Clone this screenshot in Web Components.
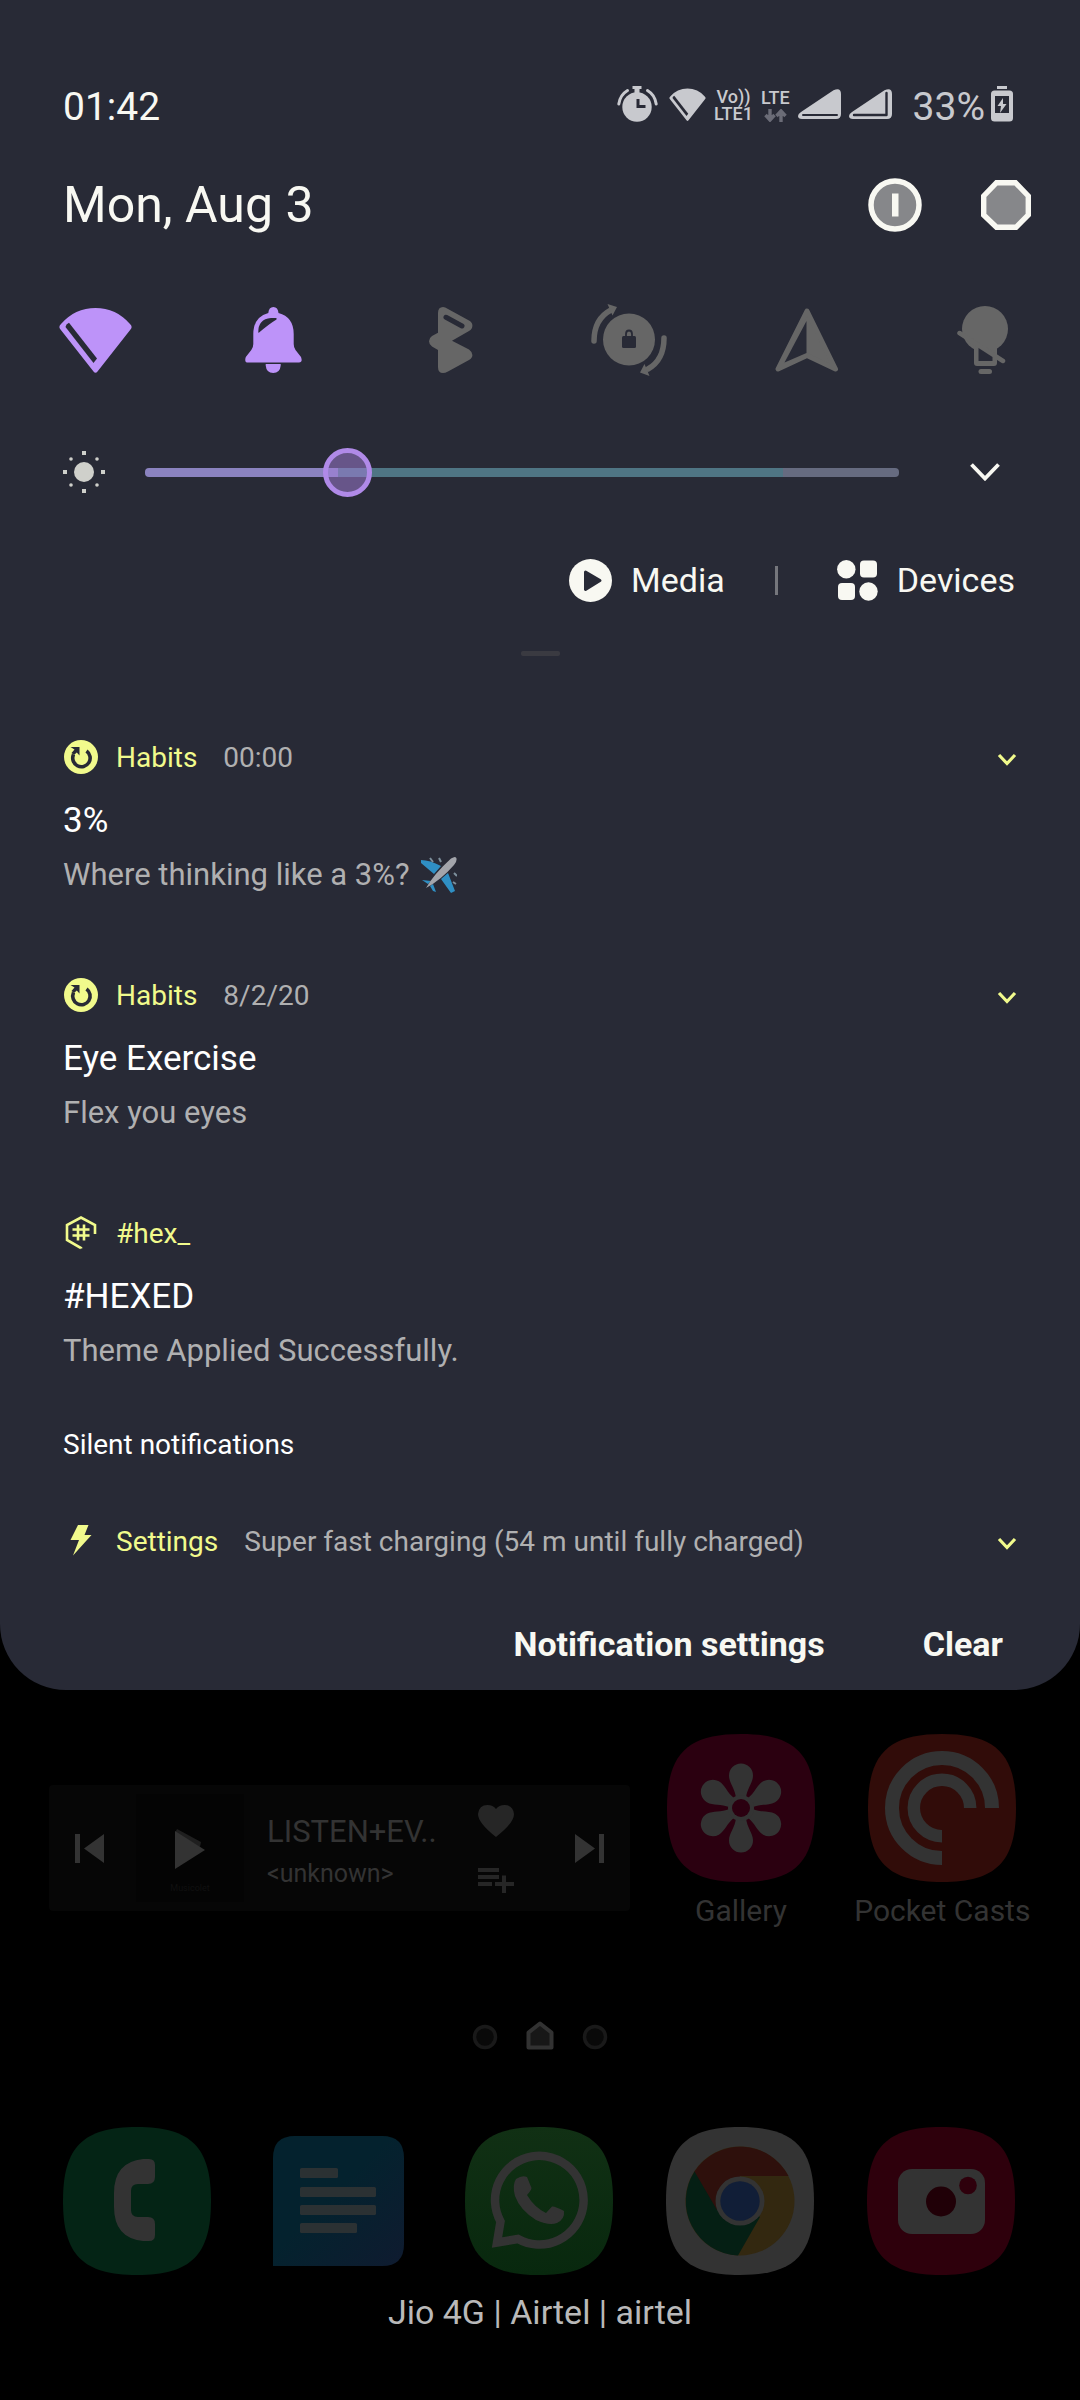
<!DOCTYPE html>
<html lang="en">
<head>
<meta charset="utf-8">
<meta name="viewport" content="width=device-width, initial-scale=1">
<title>Notification shade</title>
<style>
  :root {
    --bg: #282a36;
    --fg: #f8f8f2;
    --dim: #b0b0b1;
    --accent: #bd93f9;
    --app: #f1fa8c;
    --off: #666666;
    --status: #c8c9ce;
  }
  html, body { margin: 0; background: #000; }
  body { font-family: Roboto, "Liberation Sans", sans-serif; color: var(--fg); }
</style>
</head>
<body>
<phone-screen></phone-screen>

<script>
const SQUIRCLE = 'M74 0C128 0 148 20 148 74S128 148 74 148 0 128 0 74 20 0 74 0Z';
const petals = [0, 60, 120, 180, 240, 300].map(a =>
  `<path transform="translate(74 74) rotate(${a})" d="M-5 -10C-6 -20 -12 -25 -12 -32.500A12 12 0 0 1 12 -32.500C12 -25 6 -20 5 -10Z"/>`).join('');

/* name: [width, height, markup] */
const ICONS = {
  alarm: [41, 36, `<circle cx="20" cy="21" r="14.700" fill="currentColor"/><path d="M15.500 0h9v3h-2v4h-5V3h-2z" fill="currentColor"/>
    <path d="M1.800 18Q3 9 10.500 4.500M39.200 18Q38 9 30.500 4.500" fill="none" stroke="currentColor" stroke-width="3" stroke-linecap="round"/>
    <path d="M21 13v7.500h7.500" fill="none" stroke="var(--bg)" stroke-width="3"/>`],
  wifi: [73, 66, `<path fill="currentColor" d="M2 17A45 45 0 0 1 71 17Q74 19.500 71.500 22.500L38.500 64.500Q36.500 67 34.500 64.500L1.500 22.500Q-1 19.500 2 17Z"/>
    <path fill="var(--bg)" d="M7.500 17.500L10 15.700 38 51.500 34.500 56 6.500 20Z"/>`],
  arrows: [23, 13, `<path d="M6 0V10M1.500 6L6 11 10.500 6M17 13V3M12.500 7L17 2 21.500 7" fill="none" stroke="#6b6c77" stroke-width="3.400"/>`],
  signal: [43, 30, `<path fill="currentColor" d="M35.500 1.200Q43 -2 43 5V25Q43 30 38 30H4Q0 30 0 27 0 25 3 23Z"/>
    <path d="M5 26H39" stroke="var(--bg)" stroke-width="2" stroke-linecap="round"/>`],
  signal2: [43, 30, `<path fill="currentColor" d="M35.500 1.200Q43 -2 43 5V25Q43 30 38 30H4Q0 30 0 27 0 25 3 23Z"/>
    <path d="M5 26H37.500V4" fill="none" stroke="var(--bg)" stroke-width="2.400" stroke-linecap="round" stroke-linejoin="round"/>`],
  battery: [22, 36, `<path fill="currentColor" d="M6 0h10v3H6z"/><rect y="4.500" width="22" height="31" rx="3.500" fill="currentColor"/>
    <path fill="var(--bg)" d="M4 10h14v17H4z"/><path fill="currentColor" d="M12 12L6.500 20H10L9 27 15.500 18H12Z"/>`],
  power: [54, 54, `<circle cx="27" cy="27" r="24" fill="#86878a" stroke="currentColor" stroke-width="5.500"/><path fill="currentColor" d="M24 15.500h6.500v23H24z"/>`],
  octagon: [50, 50, `<path d="M15.500 2.700H34.500L47.300 16V35L35 47.300H15.500L2.700 35V16Z" fill="#86878a" stroke="currentColor" stroke-width="5.400"/>`],
  bell: [57, 66, `<path fill="currentColor" d="M23.300 6Q23.800 0 28.400 0T33.500 6Q48.700 10 48.700 27V37Q48.700 40.500 50.500 43L56 50Q58 55.500 54 55.500H3Q-1 55.500 .8 50L6.300 43Q8.300 40.500 8.300 37V27Q8.300 10 23.300 6ZM20.700 57H35.700V58.500Q35 66 28.200 66T20.700 58.500Z"/>
    <path fill="var(--bg)" d="M13.300 25.500Q13 12 26 11H31.500V12.500Q24 17 13.800 25.800Z"/>`],
  bluetooth: [44, 66, `<path fill="currentColor" d="M9 6Q9 0 14 0 16 0 19 2L40 13.500Q43.400 15.500 43.400 18.500 43.400 22 40 24L23 33.700 40 42.500Q43.400 45 43.400 48 43.400 51 40 53L19 64.500Q16 66 14 66 9 66 9 60V43L3 39.500Q0 37.500 0 34.300 0 31 3 29L9 25.700Z"/>
    <path d="M17 10.300L33 19" stroke="var(--bg)" stroke-width="5" stroke-linecap="round"/>`],
  rotate: [76, 72, `<circle cx="38" cy="35.500" r="26" fill="currentColor"/>
    <path d="M3 37Q3 15 20 6M73 34Q73 56 57 65" fill="none" stroke="currentColor" stroke-width="5.500" stroke-linecap="round"/>
    <path fill="currentColor" d="M16.500 0L26 3 21.500 11.500ZM49 68.500L58.500 72 53.500 60Z"/>
    <rect x="31" y="32" width="14" height="12" rx="1.500" fill="var(--bg)"/><path d="M35 33V30Q35 26.500 38 26.500T41 30V33" fill="none" stroke="var(--bg)" stroke-width="1.800"/>`],
  location: [64, 64, `<path d="M32 3L60.500 61 32 47.500 3 61Z" fill="currentColor" stroke="currentColor" stroke-width="5" stroke-linejoin="round"/><path fill="var(--bg)" d="M31.500 13V45L9.500 54.500Z"/>`],
  bulb: [56, 68, `<circle cx="28" cy="23" r="23" fill="currentColor"/><path fill="currentColor" d="M8 33L17 42H39L48 33ZM17 41H40V57Q40 60 37 60H20Q17 60 17 57Z"/>
    <path d="M2.500 27L46 55" stroke="currentColor" stroke-width="4.500" stroke-linecap="round"/><path fill="var(--bg)" d="M21.500 42L35.500 51V55H21.500Z"/>
    <rect x="21.500" y="63" width="13.500" height="5" rx="2.500" fill="currentColor"/>`],
  sun: [42, 42, `<g fill="#cfd0cb"><circle cx="21" cy="21" r="10"/><path d="M19 0h4v4h-4zM19 38h4v4h-4zM0 19h4v4H0zM38 19h4v4h-4z"/><circle cx="8" cy="8" r="1.800"/><circle cx="34" cy="8" r="1.800"/><circle cx="8" cy="34" r="1.800"/><circle cx="34" cy="34" r="1.800"/></g>`],
  chevron: [30, 18, `<path d="M1.500 1.500L15 15.500 28.500 1.500" fill="none" stroke="currentColor" stroke-width="3.800"/>`],
  chevronSmall: [20, 13, `<path d="M2 2L10 10.500 18 2" fill="none" stroke="currentColor" stroke-width="3.200"/>`],
  play: [43, 43, `<circle cx="21.500" cy="21.500" r="21.500" fill="currentColor"/><path d="M16.500 13L31 21.500 16.500 30.500Z" fill="var(--bg)" stroke="var(--bg)" stroke-width="3" stroke-linejoin="round"/>`],
  devices: [41, 41, `<g fill="currentColor"><circle cx="9.300" cy="9.300" r="9.200"/><rect x="23" y=".5" width="17" height="17" rx="4"/><rect x="1" y="23" width="17" height="17" rx="4"/><circle cx="31.500" cy="31.500" r="9.200"/></g>`],
  habits: [34, 34, `<circle cx="17" cy="17" r="17" fill="currentColor"/><path d="M22.500 11A8.700 8.700 0 1 1 9.500 14.500" fill="none" stroke="var(--bg)" stroke-width="3.600"/><path fill="var(--bg)" d="M6.500 7H15.500V15.500L12.800 12.500 10 15 7.500 13 10.500 9.500Z"/>`],
  hex: [34, 34, `<path d="M17 32.500V32L3 24V9L17 1.500 31 9V18" fill="none" stroke="currentColor" stroke-width="2.600"/><path d="M14 8.500V24.500M20 8.500V24.500M8.500 13.500H25.500M8.500 19.500H25.500" stroke="currentColor" stroke-width="2.600"/>`],
  bolt: [34, 34, `<path fill="currentColor" d="M14 1H24.500L20.500 11H27.500L9 31.500 15 16H6.500Z"/>`],
  plane: [36, 36, `<path fill="#2f8fc4" d="M0 3Q9 3 20 9L13 17 0 6ZM27 16L34 34 30 36 20 22ZM1 23L10 24 7 27ZM12 27L15 35 12 34 9 29Z"/><path d="M9 1l3 4M18 1l2 4M33 16l3 3M32 25l3 2" stroke="#7d8f9c" stroke-width="2"/><path fill="#a3a5ab" d="M5 31Q13 17 30 1.500 35-1.500 35.500 1.500 36 5 33 8 20 23 5 31Z"/>`],
  prev: [29, 29, `<path fill="currentColor" d="M0 0h5v29H0zM29 0V29L9 14.500Z"/>`],
  next: [29, 29, `<path fill="currentColor" d="M24 0h5v29h-5zM0 0V29L20 14.500Z"/>`],
  playPlain: [30, 40, `<path fill="#1f1f1f" d="M2 0L26 13 25 18 0 4Z"/><path fill="currentColor" d="M0 2V40L30 21Z"/>`],
  heart: [36, 32, `<path fill="currentColor" d="M18 32Q0 18 0 9 1 0 9.500 0 15 0 18 4 21 0 26.500 0 35 0 36 9 36 18 18 32Z"/>`],
  queue: [36, 25, `<path fill="currentColor" d="M0 0H21V4H0ZM0 7H21V11H0ZM0 14H14V18H0ZM24 7.500H28V14H36V18H28V25H24V18H17V14H24Z"/>`],
  dot: [26, 26, `<circle cx="13" cy="13" r="10.500" fill="#090909" stroke="#191919" stroke-width="3.500"/>`],
  home: [28, 29, `<path d="M2.500 11.500L14 2.500 25.500 11.500V26.500H2.500Z" fill="#171717" stroke="#323232" stroke-width="4" stroke-linejoin="round"/>`],
  gallery: [148, 148, `<path d="${SQUIRCLE}" fill="#2b0010"/><g fill="#333">${petals}<circle cx="74" cy="74" r="13"/></g><circle cx="74" cy="74" r="9" fill="#2b0010"/>`],
  pocket: [148, 148, `<path d="${SQUIRCLE}" fill="#310c09"/><g fill="none" stroke="#333"><path d="M74 124A50 50 0 1 1 124 74" stroke-width="14"/><path d="M74 102.200A28.200 28.200 0 1 1 102.200 74" stroke-width="12.500"/></g>`],
  phone: [148, 148, `<path d="${SQUIRCLE}" fill="#042415"/><path fill="#333" d="M80 32H86Q92 32 92 38V50Q92 57 85 57H75Q68 57 68 64V83Q68 90 75 90H85Q92 90 92 97V108Q92 114 86 114H80Q51 111 51 80V66Q51 35 80 32Z"/>`],
  messages: [148, 148, `<defs><linearGradient id="m" x1="0" y1="0" x2="1" y2="1"><stop offset=".45" stop-color="#04222e"/><stop offset="1" stop-color="#0f1b30"/></linearGradient></defs>
    <path fill="url(#m)" d="M9 139V31Q9 9 31 9H118Q140 9 140 31V117Q140 139 118 139Z"/><g fill="#2b3133"><rect x="36" y="41" width="38" height="10" rx="1.500"/><rect x="36" y="60" width="76" height="10" rx="1.500"/><rect x="36" y="78" width="76" height="10" rx="1.500"/><rect x="36" y="96" width="57" height="10" rx="1.500"/></g>`],
  whatsapp: [148, 148, `<defs><linearGradient id="w" x2="0" y2="1"><stop stop-color="#113014"/><stop offset="1" stop-color="#08280e"/></linearGradient></defs>
    <path d="${SQUIRCLE}" fill="url(#w)"/><path d="M35.500 94.500A44.300 44.300 0 1 1 53 112L32 115.500Z" fill="none" stroke="#333" stroke-width="8.500"/>
    <path fill="#333" d="M51 52Q57 48 62 50L66.500 61Q66.500 63 62 68 69 80 81 86L87 79.500Q90 79 99 84 100 92 92 96 84 99 71 93 55 83 50 69 47 58 51 52Z"/>`],
  chrome: [148, 148, `<path d="${SQUIRCLE}" fill="#333"/><circle cx="74" cy="74" r="54.500" fill="#332810"/>
    <path fill="#051f14" d="M28.500 44.500A54.500 54.500 0 0 0 72 128.500L94 90 74 74Z"/><path fill="#2e100c" d="M28.500 44.500A54.500 54.500 0 0 1 122.500 49H74V74L51 83Z"/>
    <circle cx="74" cy="74" r="24.500" fill="#333"/><circle cx="74" cy="74" r="19.700" fill="#111e37"/>`],
  camera: [148, 148, `<path d="${SQUIRCLE}" fill="#2e000c"/><rect x="31" y="42" width="87" height="65" rx="14" fill="#333"/><circle cx="74" cy="74.500" r="15" fill="#200007"/><circle cx="101" cy="58.500" r="8.800" fill="#2e000c"/>`],
};

const define = (name, html) => customElements.define(name, class extends HTMLElement {
  constructor() {
    super();
    const t = document.createElement('template');
    t.innerHTML = html;
    this.attachShadow({ mode: 'open' }).append(t.content.cloneNode(true));
  }
});

/* <ui-icon name="wifi" width="37"> draws one icon at its own or a given width */
customElements.define('ui-icon', class extends HTMLElement {
  connectedCallback() {
    if (this.shadowRoot) return;
    const [w, h, body] = ICONS[this.getAttribute('name')];
    const width = +this.getAttribute('width') || w;
    this.attachShadow({ mode: 'open' }).innerHTML = `
      <style>:host{display:inline-flex;flex:none}svg{display:block}</style>
      <svg aria-hidden="true" width="${width}" height="${Math.round(width * h / w)}" viewBox="0 0 ${w} ${h}">${body}</svg>`;
  }
});

define('status-bar', `
  <style>
    :host{display:flex;align-items:center;justify-content:space-between;height:52px;padding:0 67px 0 63px;font-size:39px;line-height:46px}
    time,.level{padding-top:5px}
    .right{display:flex;align-items:center;color:var(--status)}
    .group{display:flex;align-items:center;gap:8px}
    .stack{display:flex;flex-direction:column;align-items:center;padding-top:2px;font-size:18px;line-height:17px;font-weight:500}
    .lte{gap:3px}
    .battery{display:flex;align-items:center;gap:6px;margin-left:21px}
    .alarm{margin-right:3px}
  </style>
  <time>01:42</time>
  <div class="right">
    <div class="group">
      <ui-icon name="alarm" class="alarm"></ui-icon>
      <ui-icon name="wifi" width="37"></ui-icon>
      <div class="stack"><span>Vo))</span><span>LTE1</span></div>
      <div class="stack lte"><span>LTE</span><ui-icon name="arrows"></ui-icon></div>
      <ui-icon name="signal"></ui-icon>
      <ui-icon name="signal2"></ui-icon>
    </div>
    <div class="battery"><span class="level">33%</span><ui-icon name="battery"></ui-icon></div>
  </div>`);

define('date-row', `
  <style>
    :host{display:flex;align-items:center;justify-content:space-between;height:64px;padding:0 49px 0 63px}
    h1{margin:0;font-size:50px;line-height:64px;font-weight:400}
    div{display:flex;align-items:center;gap:59px}
    button{display:flex;padding:0;border:0;background:none;color:var(--fg)}
  </style>
  <h1>Mon, Aug 3</h1>
  <div>
    <button aria-label="Power"><ui-icon name="power"></ui-icon></button>
    <button aria-label="Settings"><ui-icon name="octagon"></ui-icon></button>
  </div>`);

customElements.define('quick-tile', class extends HTMLElement {
  connectedCallback() {
    if (this.shadowRoot) return;
    this.attachShadow({ mode: 'open' }).innerHTML = `
      <style>
        :host{display:flex;justify-content:center}
        button{display:flex;align-items:center;justify-content:center;width:100%;height:80px;padding:0;border:0;background:none;color:var(--off)}
        :host([on]) button{color:var(--accent)}
      </style>
      <button aria-label="${this.getAttribute('label')}" aria-pressed="${this.hasAttribute('on')}"><ui-icon name="${this.getAttribute('icon')}"></ui-icon></button>`;
  }
});

define('quick-tiles', `
  <style>:host{display:grid;grid-template-columns:repeat(6,1fr);padding:0 6px}</style>
  <quick-tile on icon="wifi" label="Wi-Fi"></quick-tile>
  <quick-tile on icon="bell" label="Sound"></quick-tile>
  <quick-tile icon="bluetooth" label="Bluetooth"></quick-tile>
  <quick-tile icon="rotate" label="Auto rotate"></quick-tile>
  <quick-tile icon="location" label="Location"></quick-tile>
  <quick-tile icon="bulb" label="Torch"></quick-tile>`);

define('brightness-row', `
  <style>
    :host{display:flex;align-items:center;height:50px;padding:0 80px 0 63px}
    input{flex:1;min-width:0;height:50px;margin:0 71px 0 40px;appearance:none;background:none}
    input::-webkit-slider-runnable-track{height:9px;border-radius:4px;background:linear-gradient(90deg,#8b83c0 25.600%,#4f7584 25.600% 84.600%,#666b80 84.600%)}
    input::-webkit-slider-thumb{appearance:none;box-sizing:border-box;width:49px;height:49px;margin-top:-20px;border-radius:50%;border:5px solid #b08ae8;background:#a67fdc80}
    button{display:flex;padding:0;border:0;background:none;color:var(--fg)}
  </style>
  <ui-icon name="sun"></ui-icon>
  <input type="range" min="0" max="1000" value="253" aria-label="Brightness">
  <button aria-label="Expand"><ui-icon name="chevron"></ui-icon></button>`);

define('panel-links', `
  <style>
    :host{display:flex;align-items:center;justify-content:flex-end;height:44px;padding:0 65px}
    button{display:flex;align-items:center;gap:19px;padding:0;border:0;background:none;color:var(--fg);font:inherit;font-size:34px;line-height:42px}
    i{width:3px;height:29px;margin:0 59px 0 50px;background:#75767c}
  </style>
  <button><ui-icon name="play"></ui-icon>Media</button><i></i><button><ui-icon name="devices"></ui-icon>Devices</button>`);

customElements.define('notification-item', class extends HTMLElement {
  connectedCallback() {
    if (this.shadowRoot) return;
    const more = this.hasAttribute('expandable')
      ? '<button aria-label="Expand"><ui-icon name="chevronSmall"></ui-icon></button>' : '';
    const time = this.getAttribute('time');
    this.attachShadow({ mode: 'open' }).innerHTML = `
      <style>
        :host{display:block;padding:0 63px}
        header{display:flex;align-items:center;height:34px;font-size:28px;line-height:34px}
        .badge{margin:0 18px 0 1px}
        .app,ui-icon{color:var(--app)}
        .app,.time{padding-top:2px}
        .time{margin-left:26px;color:var(--dim)}
        button{display:flex;margin-left:auto;padding:4px 0 0;border:0;background:none}
        ::slotted(h2){margin:26px 0 0;font-size:35px;line-height:42px;font-weight:400;color:#fff}
        ::slotted(p){margin:15px 0 0;font-size:31px;line-height:36px;color:var(--dim)}
      </style>
      <header><ui-icon class="badge" name="${this.getAttribute('icon')}"></ui-icon><span class="app">${this.getAttribute('app')}</span>${time ? `<span class="time">${time}</span>` : ''}${more}</header>
      <slot></slot>`;
  }
});

define('notification-list', `
  <style>
    :host{display:flex;flex-direction:column;gap:85px}
    .plane{height:36px;margin-left:4px;vertical-align:top}
    h3{margin:-26px 63px -23px;font-size:28px;line-height:34px;font-weight:400;color:#fff}
  </style>
  <notification-item icon="habits" app="Habits" time="00:00" expandable><h2>3%</h2><p>Where thinking like a 3%? <ui-icon class="plane" name="plane" role="img" aria-label="airplane"></ui-icon></p></notification-item>
  <notification-item icon="habits" app="Habits" time="8/2/20" expandable><h2>Eye Exercise</h2><p>Flex you eyes</p></notification-item>
  <notification-item icon="hex" app="#hex_"><h2>#HEXED</h2><p>Theme Applied Successfully.</p></notification-item>
  <h3>Silent notifications</h3>
  <notification-item icon="bolt" app="Settings" time="Super fast charging (54 m until fully charged)" expandable></notification-item>`);

define('panel-footer', `
  <style>
    :host{display:flex;justify-content:flex-end;gap:98px;padding:0 77px}
    button{padding:0;border:0;background:none;color:var(--fg);font:inherit;font-size:34px;line-height:42px;font-weight:700}
  </style>
  <button>Notification settings</button><button>Clear</button>`);

define('notification-panel', `
  <style>
    :host{display:flex;flex-direction:column;padding:78px 0 25px;background:var(--bg);border-radius:0 0 66px 66px}
    date-row{margin-top:43px}
    quick-tiles{margin-top:63px}
    brightness-row{margin-top:67px}
    panel-links{margin-top:61px}
    .handle{align-self:center;width:39px;height:5px;margin-top:49px;border-radius:2px;background:#3a3a41}
    notification-list{margin-top:84px}
    panel-footer{margin-top:65px}
  </style>
  <status-bar></status-bar>
  <date-row></date-row>
  <quick-tiles></quick-tiles>
  <brightness-row></brightness-row>
  <panel-links></panel-links>
  <div class="handle"></div>
  <notification-list></notification-list>
  <panel-footer></panel-footer>`);

define('music-widget', `
  <style>
    :host{display:flex;align-items:center;box-sizing:border-box;height:126px;padding:0 26px;border-radius:4px;background:#060606;color:#333}
    button{display:flex;padding:0;border:0;background:none;color:inherit}
    .art{display:flex;flex-direction:column;align-items:center;gap:14px;box-sizing:border-box;width:108px;height:108px;padding-top:35px;margin-left:32px;background:#040404;font-size:9px;line-height:10px}
    .art span{color:#101010}
    .text{flex:1;min-width:0;padding-top:6px;margin-left:23px}
    .title{font-size:31px;line-height:38px}
    .artist{margin-top:7px;font-size:25px;line-height:32px}
    .side{display:flex;flex-direction:column;align-items:center;gap:31px;padding-top:2px;margin-right:61px;color:#262626}
  </style>
  <button aria-label="Previous"><ui-icon name="prev"></ui-icon></button>
  <div class="art"><button aria-label="Play"><ui-icon name="playPlain"></ui-icon></button><span>Musicolet</span></div>
  <div class="text"><div class="title">LISTEN+EV..</div><div class="artist">&lt;unknown&gt;</div></div>
  <div class="side"><button aria-label="Like"><ui-icon name="heart"></ui-icon></button><button aria-label="Add to queue"><ui-icon name="queue"></ui-icon></button></div>
  <button aria-label="Next"><ui-icon name="next"></ui-icon></button>`);

customElements.define('app-icon', class extends HTMLElement {
  connectedCallback() {
    if (this.shadowRoot) return;
    this.attachShadow({ mode: 'open' }).innerHTML = `
      <style>
        :host{display:flex;justify-content:center;min-width:0}
        button{display:flex;flex-direction:column;align-items:center;gap:11px;padding:0;border:0;background:none;color:#333;font:inherit;font-size:30px;line-height:36px;white-space:nowrap}
      </style>
      <button aria-label="${this.getAttribute('label')}"><ui-icon name="${this.getAttribute('icon')}"></ui-icon><slot></slot></button>`;
  }
});

define('home-screen', `
  <style>
    :host{display:flex;flex-direction:column;padding:44px 0 0}
    .grid{display:grid;grid-template-columns:repeat(5,1fr);padding:0 39px 0 36px}
    music-widget{grid-column:span 3;margin:51px 10px 0 13px}
    .grid.top{align-items:start;padding-right:37px}
    .pages{display:flex;align-items:flex-end;justify-content:center;gap:28px;margin-top:92px}
    .dock{margin-top:77px}
    .carrier{margin:16px 0 0;padding-bottom:67px;text-align:center;font-size:34px;line-height:42px;color:#b9b9b9}
  </style>
  <div class="grid top">
    <music-widget></music-widget>
    <app-icon icon="gallery" label="Gallery">Gallery</app-icon>
    <app-icon icon="pocket" label="Pocket Casts">Pocket Casts</app-icon>
  </div>
  <div class="pages"><ui-icon name="dot"></ui-icon><ui-icon name="home"></ui-icon><ui-icon name="dot"></ui-icon></div>
  <div class="grid dock">
    <app-icon icon="phone" label="Phone"></app-icon>
    <app-icon icon="messages" label="Messages"></app-icon>
    <app-icon icon="whatsapp" label="WhatsApp"></app-icon>
    <app-icon icon="chrome" label="Chrome"></app-icon>
    <app-icon icon="camera" label="Camera"></app-icon>
  </div>
  <p class="carrier">Jio 4G | Airtel | airtel</p>`);

define('phone-screen', `
  <style>:host{display:block}</style>
  <notification-panel></notification-panel>
  <home-screen></home-screen>`);
</script>
</body>
</html>
